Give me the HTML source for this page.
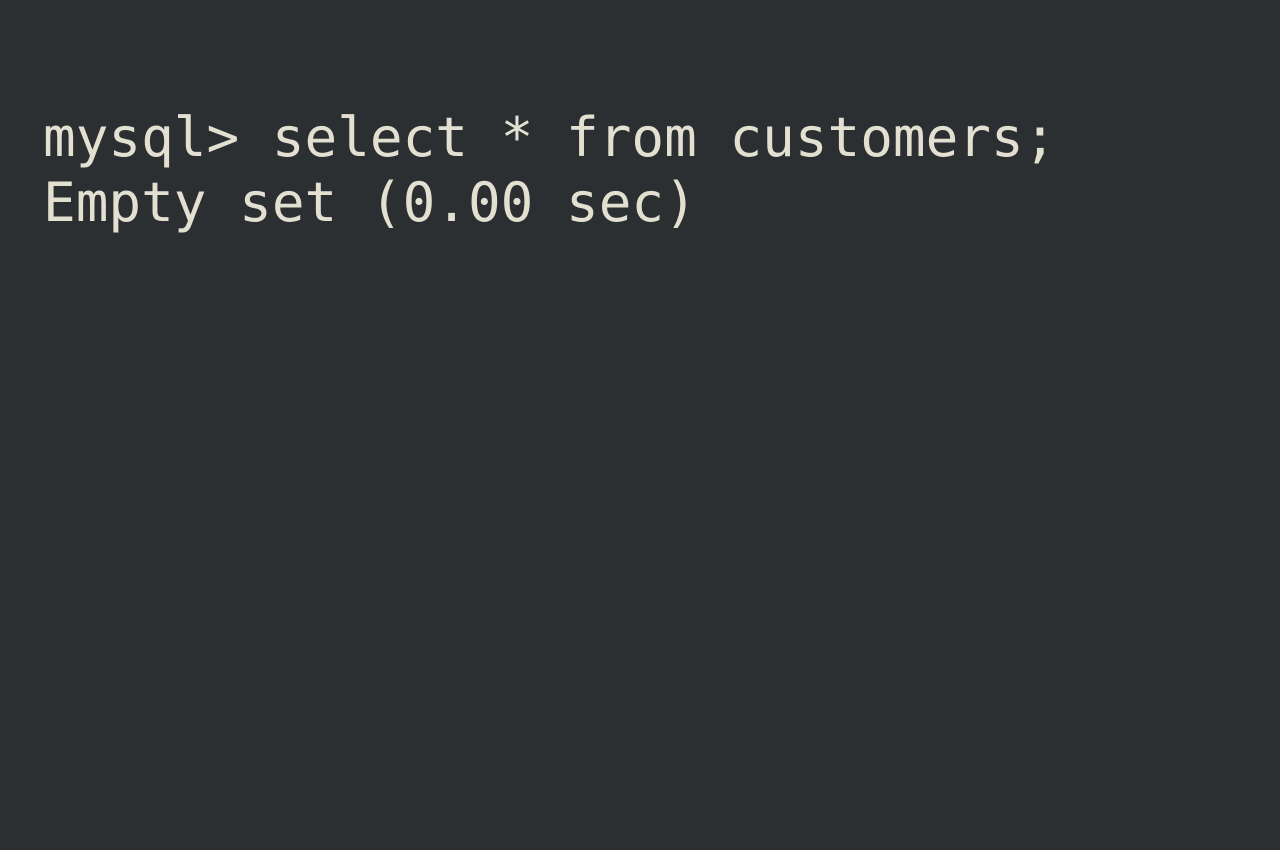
<!DOCTYPE html>
<html><head><style>
html,body{margin:0;padding:0;width:1280px;height:850px;background:#2b2f32;overflow:hidden}
pre{margin:0;position:absolute;left:43px;top:105px;font-family:"DejaVu Sans Mono","Liberation Mono",monospace;font-size:54.3px;line-height:65px;color:#e3e0d2}
</style></head><body>
<pre>mysql&gt; select * from customers;
Empty set (0.00 sec)</pre>
</body></html>
